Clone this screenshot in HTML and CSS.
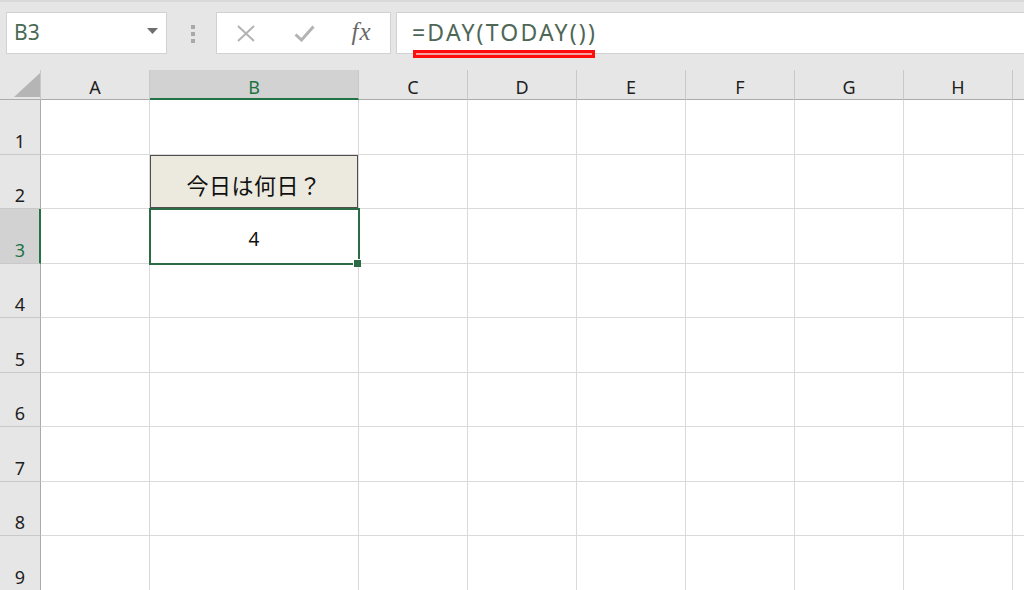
FILE: index.html
```html
<!DOCTYPE html>
<html lang="ja">
<head>
  <meta charset="UTF-8">
  <meta name="viewport" content="width=device-width, initial-scale=1.0">
  <title>DAY(TODAY())</title>
  <link rel="stylesheet" href="styles.css">
</head>
<body>
  <div class="toolbar">
    <div class="namebox">
      <span>B3</span>
      <svg class="caret" width="11" height="6" viewBox="0 0 11 6"><path d="M0 0H11L5.5 6Z" fill="#6e6e6e"/></svg>
    </div>
    <div class="grip"><i></i><i></i><i></i></div>
    <div class="fx-buttons">
      <span class="fx-slot">
        <svg width="18" height="17" viewBox="0 0 18 17"><path d="M1 1L17 16M17 1L1 16" stroke="#b3b3b3" stroke-width="2" fill="none"/></svg>
      </span>
      <span class="fx-slot">
        <svg width="21" height="17" viewBox="0 0 21 17"><path d="M1.5 9.5L7.5 15L19.5 1.5" stroke="#b3b3b3" stroke-width="3" fill="none"/></svg>
      </span>
      <span class="fx-slot fx">fx</span>
    </div>
    <div class="formula">
      <span class="formula-text">=DAY(TODAY())</span>
      <span class="mark"></span>
    </div>
  </div>

  <div class="sheet">
    <div class="corner"><span class="tri"></span></div>
    <div class="col-head">A</div>
    <div class="col-head selected">B</div>
    <div class="col-head">C</div>
    <div class="col-head">D</div>
    <div class="col-head">E</div>
    <div class="col-head">F</div>
    <div class="col-head">G</div>
    <div class="col-head">H</div>
    <div class="col-head"></div>

    <div class="row-head">1</div>
    <div class="cell"></div><div class="cell"></div><div class="cell"></div><div class="cell"></div><div class="cell"></div><div class="cell"></div><div class="cell"></div><div class="cell"></div><div class="cell"></div>

    <div class="row-head">2</div>
    <div class="cell"></div><div class="cell label">今日は何日？</div><div class="cell"></div><div class="cell"></div><div class="cell"></div><div class="cell"></div><div class="cell"></div><div class="cell"></div><div class="cell"></div>

    <div class="row-head selected">3</div>
    <div class="cell"></div><div class="cell active">4</div><div class="cell"></div><div class="cell"></div><div class="cell"></div><div class="cell"></div><div class="cell"></div><div class="cell"></div><div class="cell"></div>

    <div class="row-head">4</div>
    <div class="cell"></div><div class="cell"></div><div class="cell"></div><div class="cell"></div><div class="cell"></div><div class="cell"></div><div class="cell"></div><div class="cell"></div><div class="cell"></div>

    <div class="row-head">5</div>
    <div class="cell"></div><div class="cell"></div><div class="cell"></div><div class="cell"></div><div class="cell"></div><div class="cell"></div><div class="cell"></div><div class="cell"></div><div class="cell"></div>

    <div class="row-head">6</div>
    <div class="cell"></div><div class="cell"></div><div class="cell"></div><div class="cell"></div><div class="cell"></div><div class="cell"></div><div class="cell"></div><div class="cell"></div><div class="cell"></div>

    <div class="row-head">7</div>
    <div class="cell"></div><div class="cell"></div><div class="cell"></div><div class="cell"></div><div class="cell"></div><div class="cell"></div><div class="cell"></div><div class="cell"></div><div class="cell"></div>

    <div class="row-head">8</div>
    <div class="cell"></div><div class="cell"></div><div class="cell"></div><div class="cell"></div><div class="cell"></div><div class="cell"></div><div class="cell"></div><div class="cell"></div><div class="cell"></div>

    <div class="row-head">9</div>
    <div class="cell"></div><div class="cell"></div><div class="cell"></div><div class="cell"></div><div class="cell"></div><div class="cell"></div><div class="cell"></div><div class="cell"></div><div class="cell"></div>
  </div>
</body>
</html>
```

FILE: styles.css
```css
* {
  box-sizing: border-box;
}
body {
  margin: 0;
  background: #e6e6e6;
  font-family: "Noto Sans", "Noto Sans CJK JP", sans-serif;
  overflow: hidden;
  width: 1024px;
  height: 590px;
}
.toolbar {
  height: 70px;
  border-top: 2px solid #dadada;
  padding: 10px 0 0 6px;
  display: flex;
  align-items: flex-start;
}
.namebox {
  width: 161px;
  height: 42px;
  background: #fff;
  border: 1px solid #d2d2d2;
  display: flex;
  align-items: center;
  justify-content: space-between;
  padding: 0 8px 2px 7px;
  font-size: 21px;
  color: #4a6a55;
}
.caret {
  margin-top: -2px;
}
.grip {
  margin: 13px 21px 0 24px;
  display: flex;
  flex-direction: column;
  gap: 3px;
}
.grip i {
  display: block;
  width: 4px;
  height: 4px;
  background: #a9a9a9;
}
.fx-buttons {
  width: 175px;
  height: 42px;
  background: #fff;
  border: 1px solid #d2d2d2;
  display: flex;
  align-items: center;
}
.fx-slot {
  width: 58px;
  display: flex;
  justify-content: center;
}
.fx-slot:last-child {
  width: 57px;
}
.fx {
  font-family: "Liberation Serif", serif;
  font-style: italic;
  font-size: 25px;
  color: #6a6a6a;
  letter-spacing: 1px;
  margin-top: -3px;
}
.formula {
  position: relative;
  flex: 1;
  margin: 0 -10px 0 5px;
  height: 42px;
  background: #fff;
  border: 1px solid #d2d2d2;
  display: flex;
  align-items: center;
  padding: 0 0 2px 15px;
}
.formula-text {
  font-size: 23px;
  letter-spacing: 2.2px;
  color: #4f6757;
}
.mark {
  position: absolute;
  left: 16px;
  top: 37px;
  width: 182px;
  height: 8px;
  border: 3px solid #ff0d0d;
  background: #f4a3a3;
}
.sheet {
  display: grid;
  grid-template-columns: 41px 109px 209px repeat(7, 109px);
  grid-template-rows: 30px repeat(9, 54.5px);
}
.corner {
  background: #e6e6e6;
  border-right: 1px solid #c9c9c9;
  border-bottom: 1px solid #ababab;
  position: relative;
}
.tri {
  position: absolute;
  right: 0;
  bottom: 2px;
  width: 26px;
  height: 24px;
  background: #b5b5b5;
  clip-path: polygon(100% 0, 100% 100%, 0 100%);
}
.col-head {
  background: #e6e6e6;
  border-right: 1px solid #c9c9c9;
  border-bottom: 1px solid #ababab;
  display: flex;
  justify-content: center;
  align-items: center;
  padding-top: 4px;
  font-size: 18px;
  color: #1e1e1e;
}
.col-head.selected {
  background: #d2d2d2;
  border-bottom: 2px solid #217346;
  color: #217346;
  padding-top: 5px;
}
.row-head {
  background: #e6e6e6;
  border-right: 1px solid #ababab;
  border-bottom: 1px solid #c9c9c9;
  display: flex;
  justify-content: center;
  align-items: flex-end;
  padding-bottom: 3px;
  font-size: 18px;
  line-height: 20px;
  color: #1e1e1e;
}
.row-head.selected {
  background: #d2d2d2;
  border-right: 2px solid #217346;
  color: #217346;
  padding-left: 1px;
}
.cell {
  background: #fff;
  border-right: 1px solid #dadada;
  border-bottom: 1px solid #dadada;
  display: flex;
  justify-content: center;
  align-items: center;
  padding-top: 6px;
  color: #111;
}
.cell.label {
  background: #ece9df;
  box-shadow: inset 0 0 0 1px #4f4f4f;
  font-family: "Noto Sans CJK JP", sans-serif;
  font-size: 22px;
  letter-spacing: 0.5px;
}
.cell.active {
  position: relative;
  z-index: 1;
  outline: 2px solid #2b6b45;
  outline-offset: -1px;
  font-size: 19px;
}
.cell.active::after {
  content: "";
  position: absolute;
  right: -3px;
  bottom: -4px;
  width: 7px;
  height: 7px;
  background: #2b6b45;
  border-left: 1px solid #fff;
  border-top: 1px solid #fff;
}
```
